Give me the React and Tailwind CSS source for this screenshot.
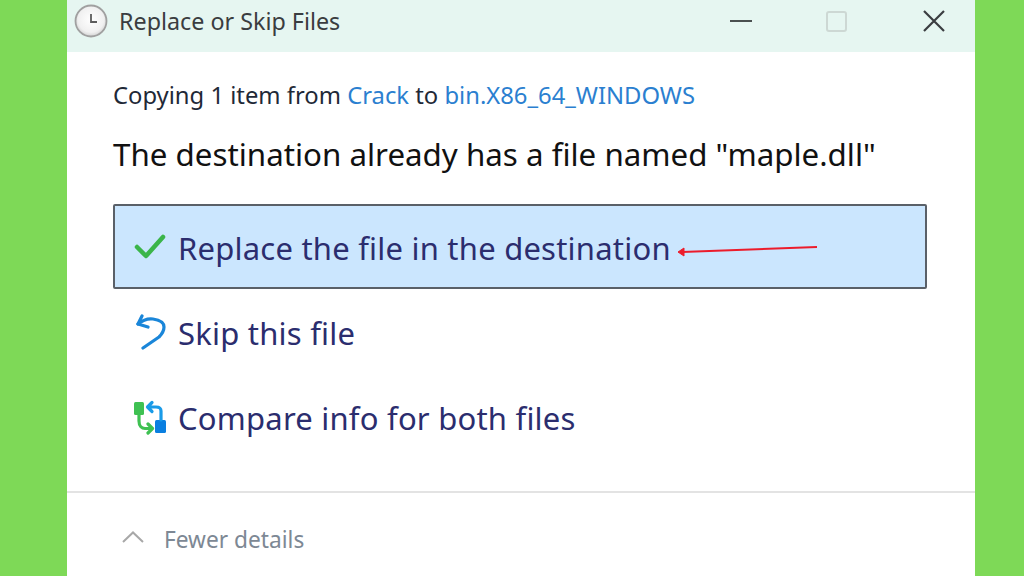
import React from 'react';

const font = "font-['Noto_Sans','Open_Sans',sans-serif]";

const ClockIcon = () => (
    <svg width="34" height="34" viewBox="0 0 34 34">
        <defs>
            <radialGradient id="face" cx="50%" cy="45%" r="55%">
                <stop offset="0%" stopColor="#ffffff" />
                <stop offset="75%" stopColor="#f0f0f0" />
                <stop offset="100%" stopColor="#d2d2d2" />
            </radialGradient>
        </defs>
        <circle cx="17" cy="17" r="15.5" fill="url(#face)" stroke="#a0a0a0" strokeWidth="1.8" />
        <path d="M17 10V18H23" fill="none" stroke="#5c5c5c" strokeWidth="1.8" />
    </svg>
);

const CheckIcon = () => (
    <svg width="32" height="26" viewBox="0 0 32 26" fill="none" stroke="#3bb54a" strokeWidth="4.5" strokeLinecap="round" strokeLinejoin="round">
        <path d="M3 13L12 22L29 3" />
    </svg>
);

const SkipIcon = () => (
    <svg width="32" height="36" viewBox="0 0 32 36" fill="none" stroke="#1a86d9" strokeWidth="3.2" strokeLinecap="round" strokeLinejoin="round">
        <path d="M8 2L4 10L14 13" />
        <path d="M4 10C10 5 15 4.5 19 5C26 6 30 9 30 13C30 18 27 21 25 23L9 34" />
    </svg>
);

const CompareIcon = () => (
    <svg width="34" height="36" viewBox="0 0 34 36" fill="none" strokeLinecap="round" strokeLinejoin="round">
        <rect x="0" y="3" width="10" height="13" rx="1.5" fill="#3fc152" />
        <path d="M5 16V22C5 27 8 29.5 11 29.5H18M14 25L18.5 29.5L14 34" stroke="#3fc152" strokeWidth="3.2" />
        <rect x="21" y="21" width="11" height="13" rx="1.5" fill="#0a7fe0" />
        <path d="M27 21V12C27 9 25 8 22 8H14M18 3.5L13.5 8L18 12.5" stroke="#1a9be8" strokeWidth="3.2" />
    </svg>
);

const Option = ({ icon, label, active, children }) => (
    <div className={`relative flex items-center rounded-[2px] h-[85px] ${active ? 'bg-[#cbe6fe] border-2 border-[#5a6068] pl-[19px]' : 'pl-[21px]'}`}>
        <div className="w-[44px] flex items-center shrink-0">{icon}</div>
        <span className="pt-[3px] text-[31px] leading-none text-[#2b2d6e] tracking-[0.22px] whitespace-nowrap">{label}</span>
        {children}
    </div>
);

export default function App() {
    return (
        <div className={`${font} w-[1024px] h-[576px] bg-[#7ed957] pl-[67px] overflow-hidden`}>
            <div className="w-[908px] h-full bg-white flex flex-col">
                <div className="h-[52px] shrink-0 bg-[#e6f6f1] flex items-center pl-[7px] pb-[10px]">
                    <ClockIcon />
                    <span className="ml-[11px] pt-[2px] text-[23.3px] leading-none text-[#3a3d40] whitespace-nowrap">Replace or Skip Files</span>
                    <div className="ml-auto flex items-center pr-[30px]">
                        <div className="w-[22px] h-[2px] bg-[#4a5050]" />
                        <div className="ml-[74px] w-[21px] h-[21px] border-2 border-[#cdd8d4] rounded-[3px]" />
                        <svg className="ml-[76px]" width="22" height="22" viewBox="0 0 22 22" fill="none" stroke="#3a3d40" strokeWidth="2.2">
                            <path d="M1 1L21 21M21 1L1 21" />
                        </svg>
                    </div>
                </div>

                <div className="flex-1 pl-[46px] pr-[48px] pt-[27px]">
                    <p className="text-[23.8px] leading-[32px] text-[#1f2937] whitespace-nowrap">
                        Copying 1 item from <span className="text-[#2b7fd0]">Crack</span> to <span className="text-[#2b7fd0]">bin.X86_64_WINDOWS</span>
                    </p>
                    <p className="mt-[23px] text-[31.3px] leading-[40px] text-[#111] whitespace-nowrap">The destination already has a file named "maple.dll"</p>

                    <div className="mt-[30px] flex flex-col">
                        <Option active label="Replace the file in the destination" icon={<CheckIcon />}>
                            <svg className="absolute left-[562px] top-[37px]" width="144" height="14" viewBox="0 0 144 14" fill="none" stroke="#ec1c2b">
                                <path d="M5 9L140 4" strokeWidth="2" />
                                <path d="M1 9L7 5V13Z" fill="#ec1c2b" strokeWidth="1" />
                            </svg>
                        </Option>
                        <Option label="Skip this file" icon={<SkipIcon />} />
                        <Option label="Compare info for both files" icon={<CompareIcon />} />
                    </div>
                </div>

                <div className="h-[85px] shrink-0 border-t-2 border-[#e3e3e3] flex items-center pl-[55px] pt-[10px]">
                    <svg width="22" height="12" viewBox="0 0 22 12" fill="none" stroke="#a8a8a8" strokeWidth="2" className="mb-[6px]">
                        <path d="M1 11L11 1.5L21 11" />
                    </svg>
                    <span className="ml-[20px] pt-[2px] text-[22.7px] leading-none text-[#7d8894] whitespace-nowrap">Fewer details</span>
                </div>
            </div>
        </div>
    );
}
